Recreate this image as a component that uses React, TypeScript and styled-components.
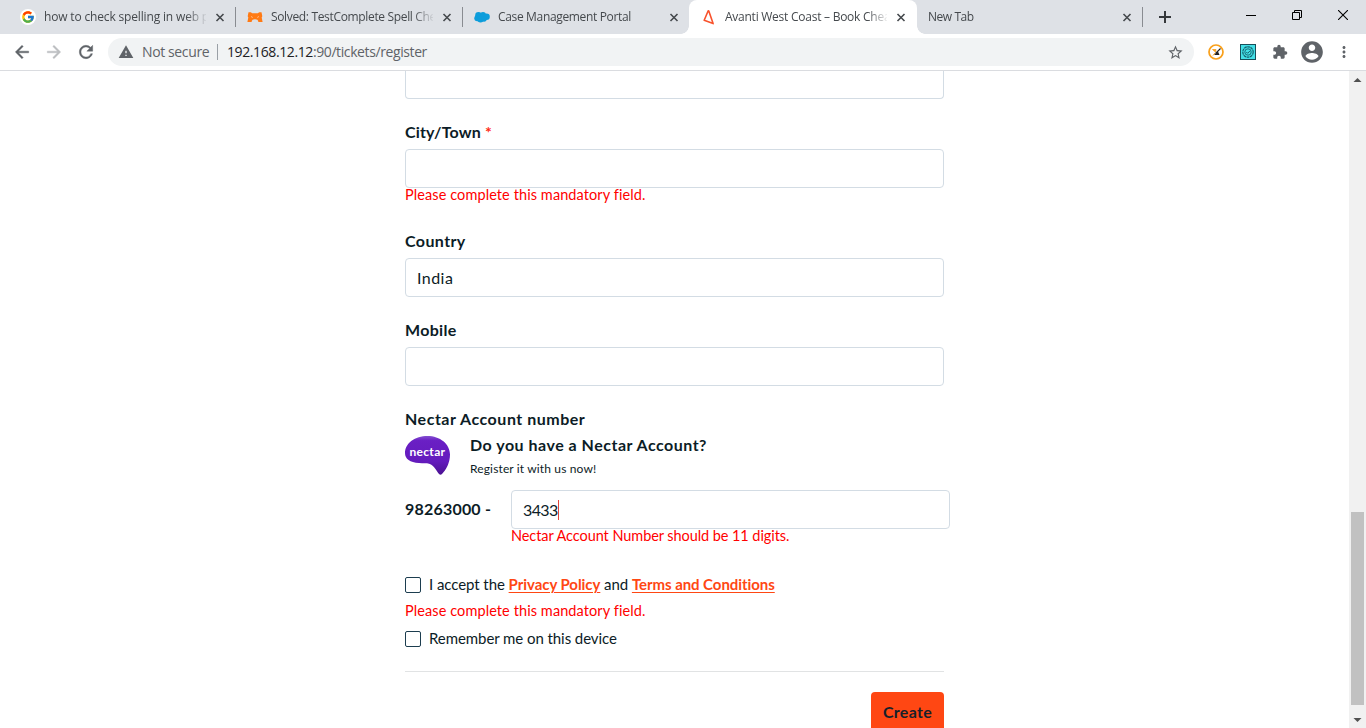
import React from "react";
import styled, { createGlobalStyle } from "styled-components";
import {
  MdArrowBack,
  MdArrowForward,
  MdRefresh,
  MdWarning,
  MdStarBorder,
  MdExtension,
  MdMoreVert,
} from "react-icons/md";
import { FcGoogle } from "react-icons/fc";

const GlobalStyle = createGlobalStyle`
  *, *::before, *::after { box-sizing: border-box; }
  html, body { margin: 0; padding: 0; overflow: hidden; }
  svg { display: block; flex: none; }
`;

const Browser = styled.div`
  display: flex;
  flex-direction: column;
  width: 1366px;
  height: 728px;
  overflow: hidden;
  background: #fff;
  font-family: "Open Sans", "Noto Sans", sans-serif;
`;

/* ---------- tab strip ---------- */

const TabStrip = styled.div`
  display: flex;
  flex: none;
  height: 34px;
  padding-left: 8px;
  background: #dee1e6;
`;

const TabBox = styled.div<{ $active?: boolean }>`
  position: relative;
  display: flex;
  align-items: center;
  flex: none;
  width: ${(p) => (p.$active ? 228 : 227)}px;
  margin-right: ${(p) => (p.$active ? -1 : 0)}px;
  height: 34px;
  padding-left: 12px;
  background: ${(p) => (p.$active ? "#fff" : "transparent")};
  border-radius: 8px 8px 0 0;

  &::before,
  &::after {
    content: "";
    display: ${(p) => (p.$active ? "block" : "none")};
    position: absolute;
    bottom: 0;
    width: 8px;
    height: 8px;
  }
  &::before {
    left: -8px;
    background: radial-gradient(circle at 0 0, transparent 7.5px, #fff 8px);
  }
  &::after {
    right: -8px;
    background: radial-gradient(circle at 100% 0, transparent 7.5px, #fff 8px);
  }
`;

const Favicon = styled.span`
  display: flex;
  align-items: center;
  justify-content: center;
  flex: none;
  width: 16px;
  height: 16px;
  margin-right: 8px;
`;

const GoogleDisc = styled(Favicon)`
  background: #fff;
  border-radius: 50%;
`;

const TabTitle = styled.span<{ $ls?: number; $wide?: boolean }>`
  flex: none;
  width: ${(p) => (p.$wide ? 185 : 162)}px;
  white-space: nowrap;
  font-size: 12px;
  line-height: 18px;
  letter-spacing: ${(p) => p.$ls ?? 0}px;
  color: #45494d;
  mask-image: linear-gradient(to right, #000 calc(100% - 20px), transparent calc(100% + 2px));
`;

const TabClose = styled.span`
  display: flex;
  margin-left: 9px;
`;

const TabDivider = styled.span<{ $shift: number }>`
  flex: none;
  width: 1px;
  height: 20px;
  margin-left: auto;
  margin-right: ${(p) => -p.$shift}px;
  background: #898c91;
`;

const NewTab = styled.span`
  display: flex;
  align-items: center;
  margin-left: 16px;
`;

const WindowControls = styled.div`
  display: flex;
  margin-left: auto;
  width: 138px;
  height: 29px;
`;

const WindowButton = styled.span`
  display: flex;
  flex: 1;
  align-items: center;
  justify-content: center;
`;

/* ---------- toolbar ---------- */

const Toolbar = styled.div`
  display: flex;
  align-items: center;
  flex: none;
  height: 37px;
  padding: 0 12px;
  background: #fff;
  border-bottom: 1px solid #dadce0;
  color: #5f6368;
`;

const NavButtons = styled.div`
  display: flex;
  gap: 12px;
  width: 96px;

  path:not([fill="none"]) {
    stroke: currentColor;
    stroke-width: 0.5px;
  }
`;

const Omnibox = styled.div`
  display: flex;
  align-items: center;
  width: 1086px;
  height: 28px;
  padding: 0 10px;
  border-radius: 14px;
  background: #f1f3f4;
  font-size: 14px;
  line-height: 20px;
`;

const Security = styled.span`
  width: 75px;
  margin-left: 8px;
  white-space: nowrap;
  letter-spacing: -0.38px;
`;

const OmniDivider = styled.span`
  width: 1px;
  height: 16px;
  background: #9aa0a6;
`;

const Url = styled.span`
  flex: 1;
  margin-left: 9px;
  white-space: nowrap;
  letter-spacing: -0.4px;
`;

const Host = styled.span`
  color: #202124;
`;

const Extensions = styled.div`
  display: flex;
  align-items: center;
  gap: 16px;
  margin-left: 14px;
`;

const Profile = styled.span`
  display: flex;
  margin: 0 -6px 0 -5px;
`;

/* ---------- page ---------- */

const Viewport = styled.div`
  display: flex;
  flex: 1;
  min-height: 0;
  overflow: hidden;
`;

const Page = styled.main`
  flex: 1;
  overflow: hidden;
  padding-left: 405px;
  font-family: Lato, "Open Sans", sans-serif;
  color: #0c1c26;
`;

const Form = styled.div`
  display: flex;
  flex-direction: column;
  width: 539px;
`;

const Label = styled.div<{ $ls?: number; $tight?: boolean }>`
  height: 20px;
  margin-top: ${(p) => (p.$tight ? 29 : 23)}px;
  margin-bottom: 7px;
  font-size: 16px;
  font-weight: 700;
  line-height: 20px;
  white-space: nowrap;
  letter-spacing: ${(p) => p.$ls ?? 0}px;
`;

const Required = styled.span`
  color: #ff2a13;
`;

const Input = styled.div<{ $cut?: boolean; $ls?: number }>`
  display: flex;
  align-items: center;
  flex: none;
  height: ${(p) => (p.$cut ? 28 : 39)}px;
  padding: 1px 11px 0;
  border: 1px solid #d3dce4;
  border-top-width: ${(p) => (p.$cut ? 0 : 1)}px;
  border-radius: ${(p) => (p.$cut ? "0 0 4px 4px" : "4px")};
  font-size: 16px;
  line-height: 20px;
  letter-spacing: ${(p) => p.$ls ?? 0}px;
`;

const Typed = styled.span`
  width: 35px;
  white-space: nowrap;
`;

const Caret = styled.span`
  flex: none;
  width: 1px;
  height: 20px;
  background: #e2453a;
`;

const ErrorText = styled.div<{ $ls?: number }>`
  height: 14px;
  font-size: 14.5px;
  line-height: 14px;
  letter-spacing: ${(p) => p.$ls ?? 0.09}px;
  white-space: nowrap;
  color: #f00;
`;

const NectarIntro = styled.div`
  display: flex;
  height: 54px;
  gap: 20px;
`;

const NectarCopy = styled.div`
  display: flex;
  flex-direction: column;
`;

const NectarTitle = styled.div`
  height: 20px;
  font-size: 16px;
  font-weight: 700;
  line-height: 18px;
  letter-spacing: 0.5px;
  white-space: nowrap;
`;

const NectarSub = styled.div`
  margin-top: 4px;
  font-size: 12px;
  line-height: 18px;
  letter-spacing: 0.14px;
  white-space: nowrap;
`;

const NectarRow = styled.div`
  display: flex;
`;

const NectarPrefix = styled.div`
  flex: none;
  width: 106px;
  font-size: 16px;
  font-weight: 700;
  line-height: 37px;
  letter-spacing: 0.2px;
`;

const NectarEntry = styled.div`
  flex: none;
  width: 439px;
`;

const CheckRow = styled.div`
  display: flex;
  align-items: center;
  height: 16px;
  font-size: 15px;
  line-height: 16px;
  letter-spacing: -0.07px;
  white-space: pre;
`;

const CheckText = styled.span`
  height: 18px;
`;

const CheckBox = styled.span`
  width: 16px;
  height: 16px;
  margin-right: 8px;
  border: 1px solid #1c3d4f;
  border-radius: 2px;
`;

const Link = styled.a`
  color: #ff4713;
  font-weight: 700;
  letter-spacing: -0.06px;
  text-decoration: underline;
  text-decoration-thickness: 1px;
  text-underline-offset: 2px;
`;

const Gap = styled.div<{ $h: number }>`
  flex: none;
  height: ${(p) => p.$h}px;
`;

const Rule = styled.div`
  height: 1px;
  margin: 24px 0 20px;
  background: #e1e3e4;
`;

const CreateButton = styled.button`
  align-self: flex-end;
  width: 73px;
  height: 41px;
  padding: 0 0 2px;
  border: 0;
  border-radius: 4px;
  background: #ff4713;
  color: #16202a;
  font: 700 16px/39px Lato, sans-serif;
  letter-spacing: 0.3px;
`;

const ScrollTrack = styled.div`
  display: flex;
  flex-direction: column;
  align-items: center;
  flex: none;
  width: 17px;
  background: #f1f1f1;
`;

const ScrollThumb = styled.div`
  width: 13px;
  height: 193px;
  margin-top: 424px;
  background: #c1c1c1;
`;

/* ---------- drawings ---------- */

const Cross = () => (
  <svg width="10" height="9" viewBox="0 0 10 9">
    <path d="M1.500 1l7 7M8.500 1l-7 7" stroke="#45494d" strokeWidth="1.6" />
  </svg>
);

const TestIcon = () => (
  <svg width="16" height="16" viewBox="0 0 16 16">
    <path
      d="M1.500 3.200h2.300l1.400 1h5.600l1.400-1h2.300l.8 4-.6 1.300.9 4.500h-4.200C11.200 11 10 10.300 8 10.300S4.800 11 4.600 13H.4l.9-4.500L.7 7.200z"
      fill="#ff7a14"
    />
    <path d="M4 7.500l1.800 1M12 7.500l-1.800 1" stroke="#ffc79c" strokeWidth=".8" />
  </svg>
);

const CloudIcon = () => (
  <svg width="16" height="16" viewBox="0 0 16 16">
    <g fill="#0d9ddb">
      <circle cx="4.500" cy="6.300" r="3.300" />
      <circle cx="9" cy="6" r="3" />
      <circle cx="12.600" cy="7.700" r="3.200" />
      <circle cx="3.300" cy="9.200" r="3" />
      <circle cx="6.500" cy="10.200" r="3.200" />
      <circle cx="10" cy="10" r="2.700" />
    </g>
  </svg>
);

const AvantiIcon = () => (
  <svg width="16" height="16" viewBox="0 0 16 16">
    <path
      d="M7.200 1.800L3.200 11.300l8.900 3.300L7.800 2z"
      fill="none"
      stroke="#f8522c"
      strokeWidth="1.600"
      strokeLinejoin="round"
    />
  </svg>
);

const SpellIcon = () => (
  <svg width="16" height="16" viewBox="0 0 16 16">
    <circle cx="8" cy="8" r="7" fill="#fff" stroke="#f9a01b" strokeWidth="1.700" />
    <path d="M4.500 5.500H8l-.5 2.500z" fill="#f9a01b" stroke="#f9a01b" strokeWidth=".8" />
    <path d="M5 11.500l2-2.500" stroke="#f9a01b" strokeWidth="1" />
    <path d="M10 7.500L6 11h5.500z" fill="#222" />
    <path d="M12.500 4.500L7.500 9.500" stroke="#222" strokeWidth="1.100" />
  </svg>
);

const BadgeIcon = () => (
  <svg width="16" height="16" viewBox="0 0 16 16">
    <rect x=".5" y=".5" width="15" height="15" fill="#43dfe6" stroke="#174f5a" />
    <circle cx="8" cy="8" r="5.200" fill="none" stroke="#14606c" strokeWidth="1.200" strokeDasharray="2.800 .5" />
    <circle cx="8" cy="8" r="3.200" fill="none" stroke="#14606c" strokeWidth=".9" />
    <path d="M6.300 8l1.300 1.300L10 6.900" fill="none" stroke="#14606c" strokeWidth="1" />
  </svg>
);

const ProfileIcon = () => (
  <svg width="26" height="26" viewBox="0 0 24 24" fill="currentColor">
    <path d="M12 2C6.480 2 2 6.480 2 12s4.480 10 10 10 10-4.480 10-10S17.520 2 12 2zm0 3c1.660 0 3 1.340 3 3s-1.340 3-3 3-3-1.340-3-3 1.340-3 3-3zm0 14.200c-2.500 0-4.710-1.280-6-3.220.03-1.990 4-3.080 6-3.080 1.990 0 5.970 1.090 6 3.080-1.290 1.940-3.500 3.220-6 3.220z" />
  </svg>
);

const LogoText = styled.text`
  font: 700 12px Lato, sans-serif;
  fill: #fff;
`;

const NectarLogo = () => (
  <svg width="45" height="39" viewBox="0 0 45 39">
    <defs>
      <linearGradient id="nectar" x1="0" y1="0" x2="0" y2="1">
        <stop offset="0" stopColor="#8350d0" />
        <stop offset=".12" stopColor="#6a1fc4" />
        <stop offset=".65" stopColor="#641bbd" />
        <stop offset="1" stopColor="#4b1292" />
      </linearGradient>
    </defs>
    <path
      d="M22.500 0C35 0 45 8 45 18.500C45 27 41 34 37 38Q35.500 39.500 34 38C31 34 28 27.500 22 27.200Q18 27.300 14 27C5 26.500 0 23 0 17C0 7 10 0 22.500 0z"
      fill="url(#nectar)"
    />
    <LogoText x="4.500" y="20" textLength="35.500">
      nectar
    </LogoText>
  </svg>
);

const ScrollArrow = ({ down }: { down?: boolean }) => (
  <svg width="17" height="17" viewBox="0 0 17 17">
    <path d={down ? "M4.500 7h8l-4 4z" : "M4.500 11h8l-4-4z"} fill="#505050" />
  </svg>
);

/* ---------- app ---------- */

type TabProps = {
  title: string;
  icon?: React.ReactNode;
  active?: boolean;
  divider?: number;
  ls?: number;
};

const Tab = ({ title, icon, active, divider, ls }: TabProps) => (
  <TabBox $active={active}>
    {icon}
    <TabTitle $ls={ls} $wide={!icon}>
      {title}
    </TabTitle>
    <TabClose>
      <Cross />
    </TabClose>
    {divider !== undefined && <TabDivider $shift={divider} />}
  </TabBox>
);

export default function App() {
  return (
    <Browser>
      <GlobalStyle />
      <TabStrip>
        <Tab
          title="how to check spelling in web p"
          ls={-0.16}
          divider={1}
          icon={
            <GoogleDisc>
              <FcGoogle size={14} />
            </GoogleDisc>
          }
        />
        <Tab title="Solved: TestComplete Spell Che" ls={-0.34} divider={1} icon={<Favicon><TestIcon /></Favicon>} />
        <Tab title="Case Management Portal" ls={-0.34} icon={<Favicon><CloudIcon /></Favicon>} />
        <Tab title="Avanti West Coast – Book Chea" ls={-0.25} active icon={<Favicon><AvantiIcon /></Favicon>} />
        <Tab title="New Tab" ls={-0.45} divider={0} />
        <NewTab>
          <svg width="12" height="12" viewBox="0 0 12 12">
            <path d="M6 0v12M0 6h12" stroke="#35383b" strokeWidth="2" />
          </svg>
        </NewTab>
        <WindowControls>
          <WindowButton>
            <svg width="10" height="10" viewBox="0 0 10 10">
              <path d="M0 5.500h10" stroke="#000" />
            </svg>
          </WindowButton>
          <WindowButton>
            <svg width="10" height="10" viewBox="0 0 10 10">
              <path d="M.5 2.500h7v7h-7zM2.500 2.500v-2h7v7h-2" fill="none" stroke="#000" />
            </svg>
          </WindowButton>
          <WindowButton>
            <svg width="10" height="10" viewBox="0 0 10 10">
              <path d="M0 0l10 10M10 0L0 10" stroke="#000" strokeWidth="1.100" />
            </svg>
          </WindowButton>
        </WindowControls>
      </TabStrip>

      <Toolbar>
        <NavButtons>
          <MdArrowBack size={20} />
          <MdArrowForward size={20} color="#bcbec1" />
          <MdRefresh size={20} />
        </NavButtons>
        <Omnibox>
          <MdWarning size={16} />
          <Security>Not secure</Security>
          <OmniDivider />
          <Url>
            <Host>192.168.12.12</Host>:90/tickets/register
          </Url>
          <MdStarBorder size={17} />
        </Omnibox>
        <Extensions>
          <SpellIcon />
          <BadgeIcon />
          <MdExtension size={16} />
          <Profile>
            <ProfileIcon />
          </Profile>
          <MdMoreVert size={18} />
        </Extensions>
      </Toolbar>

      <Viewport>
        <Page>
          <Form>
            <Input $cut />
            <Label $ls={0.17}>
              City/Town <Required>*</Required>
            </Label>
            <Input />
            <ErrorText>Please complete this mandatory field.</ErrorText>
            <Label $tight $ls={0.4}>Country</Label>
            <Input $ls={0.45}>India</Input>
            <Label $ls={0.3}>Mobile</Label>
            <Input />
            <Label $ls={0.52}>Nectar Account number</Label>
            <NectarIntro>
              <NectarLogo />
              <NectarCopy>
                <NectarTitle>Do you have a Nectar Account?</NectarTitle>
                <NectarSub>Register it with us now!</NectarSub>
              </NectarCopy>
            </NectarIntro>
            <NectarRow>
              <NectarPrefix>98263000 -</NectarPrefix>
              <NectarEntry>
                <Input $ls={-0.6}>
                  <Typed>3433</Typed>
                  <Caret />
                </Input>
                <ErrorText $ls={-0.07}>Nectar Account Number should be 11 digits.</ErrorText>
              </NectarEntry>
            </NectarRow>
            <Gap $h={34} />
            <CheckRow>
              <CheckBox />
              <CheckText>I accept the </CheckText>
              <CheckText>
                <Link>Privacy Policy</Link>
              </CheckText>
              <CheckText> and </CheckText>
              <CheckText>
                <Link>Terms and Conditions</Link>
              </CheckText>
            </CheckRow>
            <Gap $h={11} />
            <ErrorText>Please complete this mandatory field.</ErrorText>
            <Gap $h={13} />
            <CheckRow>
              <CheckBox />
              <CheckText>Remember me on this device</CheckText>
            </CheckRow>
            <Rule />
            <CreateButton>Create</CreateButton>
          </Form>
        </Page>
        <ScrollTrack>
          <ScrollArrow />
          <ScrollThumb />
          <Gap $h={6} />
          <ScrollArrow down />
        </ScrollTrack>
      </Viewport>
    </Browser>
  );
}
